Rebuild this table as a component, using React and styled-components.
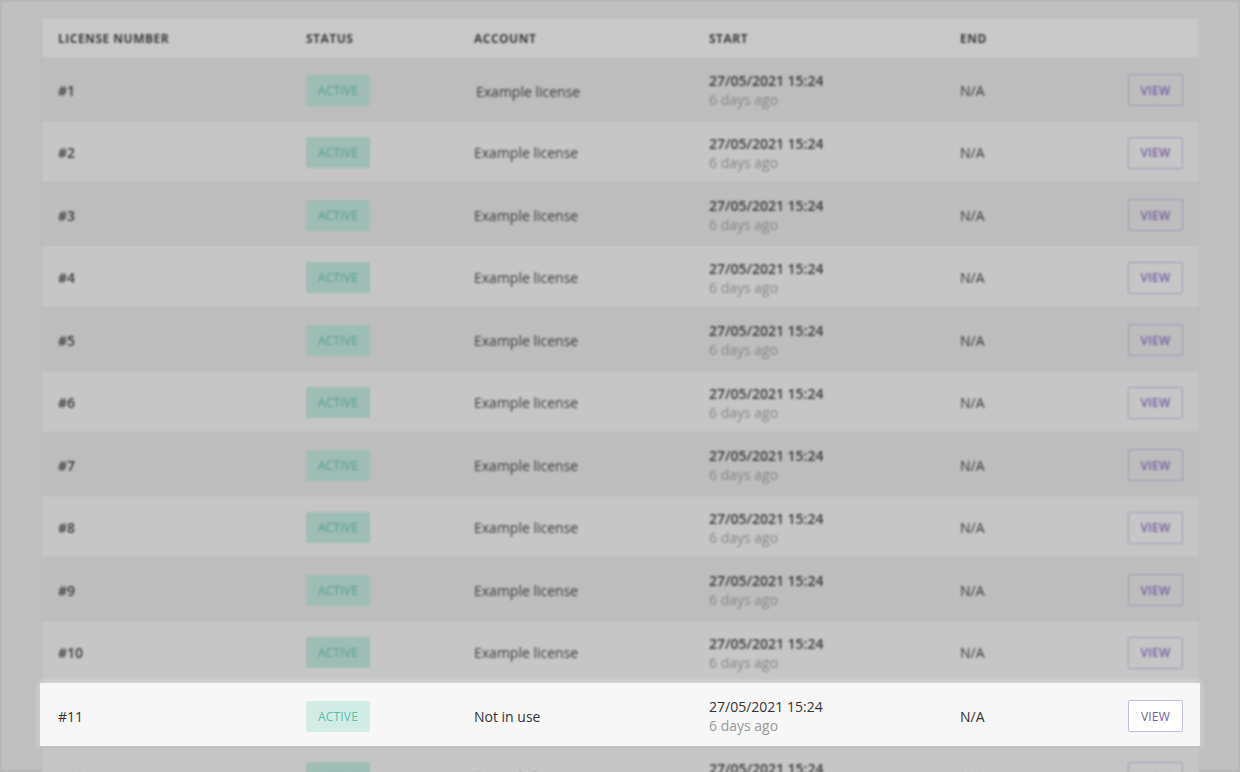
import React from "react";
import styled, { createGlobalStyle, css } from "styled-components";

const Global = createGlobalStyle`
  html, body { margin: 0; padding: 0; }
  body { font-family: "Open Sans", "Liberation Sans", sans-serif; background: #bfbfbf; }
`;

const Screen = styled.div`
  position: relative;
  width: 1240px;
  height: 772px;
  overflow: hidden;
  background: #bfbfbf;
  box-shadow: inset 0 0 0 2px #b6b6b6;
`;

const Dimmed = styled.div`
  padding: 18px 41px 0 42px;
  filter: blur(1px);
`;

const Card = styled.div`
  background: #c6c6c6;
  box-shadow: -1px 0 0 #b8b8b8, 1px 0 0 #bababa, 0 -1px 0 #bababa;
`;

const grid = css`
  display: grid;
  grid-template-columns: 248px 168px 235px 251px 1fr auto;
  align-items: center;
  padding: 0 16px;
`;

const HeaderRow = styled.div`
  ${grid};
  height: 40px;
  background: #c9c9c9;
  border-bottom: 1px solid #bcbcbc;
  box-sizing: border-box;
`;

const HeadCell = styled.div`
  font-size: 12px;
  font-weight: 700;
  letter-spacing: 0.5px;
  color: #3d3d3d;
  text-transform: uppercase;
  padding-top: 1px;
`;

const Row = styled.div`
  ${grid};
  height: 62.5px;
  box-sizing: border-box;
  padding-top: 3px;
  background: ${(p) => (p.$light ? "#c6c6c6" : "#bdbdbd")};
  border-bottom: 1px solid #b8b8b8;
  color: #3a3a3a;
  font-size: 14px;
  ${(p) =>
    p.$focus &&
    css`
      background: #f7f7f7;
      color: #333333;
      border-bottom: none;
      height: 63px;
      padding: 3px 17px 0 18px;
      box-shadow: 0 0 5px 1px rgba(255, 255, 255, 0.55), 0 2px 3px rgba(0, 0, 0, 0.18);
    `}
`;

const NumCell = styled.div`
  font-weight: ${(p) => (p.$focus ? 400 : 600)};
  font-size: 14px;
`;

const Text = styled.div`
  font-size: 14px;
  font-weight: ${(p) => (p.$focus ? 400 : 500)};
  padding-top: ${(p) => (p.$nudge ? "3px" : "0")};
  margin-left: ${(p) => (p.$nudge ? "2px" : "0")};
`;

const DateCell = styled.div`
  display: flex;
  flex-direction: column;
  line-height: 19px;
`;

const DateMain = styled.span`
  font-weight: ${(p) => (p.$focus ? 400 : 600)};
`;

const DateSub = styled.span`
  color: ${(p) => (p.$focus ? "#9a9a9a" : "#878787")};
`;

const Badge = styled.span`
  justify-self: start;
  display: inline-flex;
  align-items: center;
  justify-content: center;
  width: 64px;
  height: 31px;
  border-radius: 2px;
  font-size: 12px;
  font-weight: 500;
  letter-spacing: 0.2px;
  background: ${(p) => (p.$focus ? "#d2ede6" : "#9ebdb5")};
  color: ${(p) => (p.$focus ? "#56c1a7" : "#4fa18f")};
`;

const ViewButton = styled.button`
  width: 55px;
  height: 32px;
  box-sizing: border-box;
  border-radius: 2px;
  border: 1px solid ${(p) => (p.$focus ? "#c8bde0" : "#a195b8")};
  background: ${(p) => (p.$focus ? "#ffffff" : "transparent")};
  color: ${(p) => (p.$focus ? "#7a5aa8" : "#7760a2")};
  font-family: "Open Sans", "Liberation Sans", sans-serif;
  font-size: 12px;
  font-weight: ${(p) => (p.$focus ? 400 : 600)};
  letter-spacing: 0.2px;
  padding: 0;
  cursor: pointer;
`;

const Spotlight = styled.div`
  position: absolute;
  left: 40px;
  top: 683px;
  width: 1160px;
`;

const rows = Array.from({ length: 12 }, (_, i) => ({
  n: i + 1,
  account: i === 10 ? "Not in use" : "Example license",
}));

function LicenseRow({ r, focus, light }) {
  return (
    <Row $focus={focus} $light={light}>
      <NumCell $focus={focus}>#{r.n}</NumCell>
      <div>
        <Badge $focus={focus}>ACTIVE</Badge>
      </div>
      <Text $focus={focus} $nudge={r.n === 1}>
        {r.account}
      </Text>
      <DateCell>
        <DateMain $focus={focus}>27/05/2021 15:24</DateMain>
        <DateSub $focus={focus}>6 days ago</DateSub>
      </DateCell>
      <Text $focus={focus}>N/A</Text>
      <ViewButton $focus={focus}>VIEW</ViewButton>
    </Row>
  );
}

export default function App() {
  return (
    <>
      <Global />
      <Screen>
        <Dimmed>
          <Card>
            <HeaderRow>
              <HeadCell>License Number</HeadCell>
              <HeadCell>Status</HeadCell>
              <HeadCell>Account</HeadCell>
              <HeadCell>Start</HeadCell>
              <HeadCell>End</HeadCell>
              <HeadCell />
            </HeaderRow>
            {rows.map((r, i) => (
              <LicenseRow key={r.n} r={r} light={i % 2 === 1} />
            ))}
          </Card>
        </Dimmed>
        <Spotlight>
          <LicenseRow r={rows[10]} focus />
        </Spotlight>
      </Screen>
    </>
  );
}
